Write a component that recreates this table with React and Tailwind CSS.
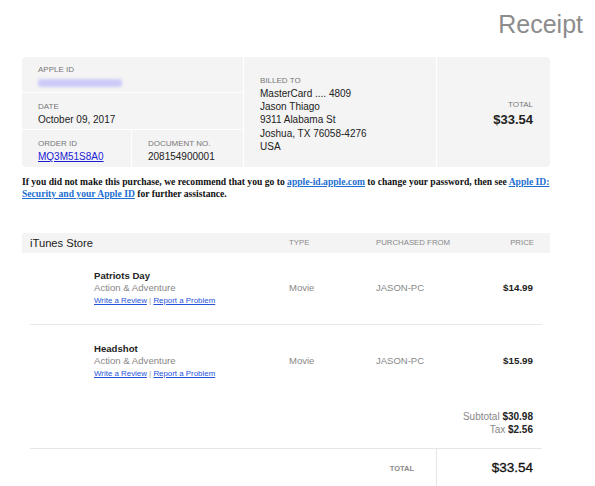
export default function App() {
  const items = [
    { title: "Patriots Day", genre: "Action & Adventure", price: "$14.99" },
    { title: "Headshot", genre: "Action & Adventure", price: "$15.99" },
  ];
  return (
    <div className="w-[595px] h-[486px] bg-white overflow-hidden font-['Liberation_Sans',Arial,sans-serif] text-[#333]">
      <div className="h-[57px] flex justify-end items-start pr-[12px] pt-[9px]">
        <span className="text-[25px] leading-[30px] text-[#8c8c8c]">Receipt</span>
      </div>
      <div className="ml-[22px] w-[528px]">
        {/* info box */}
        <div className="flex h-[110px] bg-[#f4f4f4] rounded-[4px] overflow-hidden">
          <div className="w-[222px] flex flex-col border-r border-white">
            <div className="h-[36px] border-b border-white pl-[16px] pt-[8px]">
              <div className="text-[8px] leading-[10px] text-[#777] uppercase">Apple ID</div>
              <div className="mt-[4px] h-[8px] w-[84px] bg-[#cbcaf8] rounded-[3px] blur-[1.5px]"></div>
            </div>
            <div className="h-[37px] border-b border-white pl-[16px] pt-[9px]">
              <div className="text-[8px] leading-[10px] text-[#777] uppercase">Date</div>
              <div className="text-[10px] leading-[14px] text-[#222] mt-[1px]">October 09, 2017</div>
            </div>
            <div className="flex-1 flex">
              <div className="w-[110px] border-r border-white pl-[16px] pt-[9px]">
                <div className="text-[8px] leading-[10px] text-[#777] uppercase">Order ID</div>
                <div className="text-[10px] leading-[14px] mt-[1px]">
                  <a className="text-[#1a1ad6] underline">MQ3M51S8A0</a>
                </div>
              </div>
              <div className="flex-1 pl-[16px] pt-[9px]">
                <div className="text-[8px] leading-[10px] text-[#777] uppercase">Document No.</div>
                <div className="text-[10px] leading-[14px] text-[#222] mt-[1px]">208154900001</div>
              </div>
            </div>
          </div>
          <div className="w-[193px] border-r border-white pl-[16px] pt-[18px]">
            <div className="text-[8px] leading-[11px] text-[#777] uppercase">Billed To</div>
            <div className="text-[10px] leading-[13.2px] text-[#222] mt-[1px]">
              <div>MasterCard .... 4809</div>
              <div>Jason Thiago</div>
              <div>9311 Alabama St</div>
              <div>Joshua, TX 76058-4276</div>
              <div>USA</div>
            </div>
          </div>
          <div className="flex-1 flex flex-col items-end justify-center pr-[17px] pt-[3px]">
            <div className="text-[8px] leading-[11px] text-[#777] uppercase">Total</div>
            <div className="text-[13px] leading-[17px] font-bold text-[#222] mt-[1px]">$33.54</div>
          </div>
        </div>

        {/* notice */}
        <p className="mt-[9px] font-['Liberation_Serif',serif] font-bold text-[9.6px] leading-[12px] text-[#111]">
          If you did not make this purchase, we recommend that you go to{" "}
          <a className="text-[#1d6fd1] underline">apple-id.apple.com</a> to change your password, then see{" "}
          <a className="text-[#1d6fd1] underline">Apple ID: Security and your Apple ID</a> for further assistance.
        </p>

        {/* table header */}
        <div className="mt-[33px] h-[20px] bg-[#f4f4f4] flex items-center">
          <div className="w-[267px] pl-[8px] text-[11.2px] text-[#222]">iTunes Store</div>
          <div className="w-[87px] text-[7.8px] text-[#888] uppercase">Type</div>
          <div className="flex-1 text-[7.8px] text-[#888] uppercase">Purchased From</div>
          <div className="pr-[16px] text-[7.8px] text-[#888] uppercase">Price</div>
        </div>

        {/* items */}
        {items.map((it, i) => (
          <div key={i} className={i === 0 ? "mx-[8px] border-b border-[#e8e8e8]" : "mx-[8px]"}>
            <div className={i === 0 ? "flex items-center h-[71px] pb-[1px]" : "flex items-center h-[73px] pt-[1px] pb-[1px]"}>
              <div className="w-[259px] pl-[64px]">
                <div className="text-[9.6px] leading-[12px] font-bold text-[#222]">{it.title}</div>
                <div className="text-[9.6px] leading-[12px] text-[#888]">{it.genre}</div>
                <div className="text-[7.9px] leading-[13px] text-[#999]">
                  <a className="text-[#2653d9] underline">Write a Review</a> |{" "}
                  <a className="text-[#2653d9] underline">Report a Problem</a>
                </div>
              </div>
              <div className="w-[87px] text-[9.5px] text-[#888]">Movie</div>
              <div className="flex-1 text-[9.5px] text-[#888]">JASON-PC</div>
              <div className="pr-[9px] text-[9.8px] font-bold text-[#222]">{it.price}</div>
            </div>
          </div>
        ))}

        {/* subtotal */}
        <div className="mt-[12px] flex flex-col items-end pr-[17px] text-[10px] leading-[13px]">
          <div>
            <span className="text-[#888]">Subtotal</span> <span className="font-bold text-[#222]">$30.98</span>
          </div>
          <div>
            <span className="text-[#888]">Tax</span> <span className="font-bold text-[#222]">$2.56</span>
          </div>
        </div>

        {/* total */}
        <div className="mt-[12px] mx-[8px] border-t border-[#e6e6e6] flex h-[50px]">
          <div className="w-[407px] border-r border-[#e6e6e6] flex items-center justify-end pr-[22px] pb-[10px]">
            <span className="text-[7.5px] font-bold text-[#888] uppercase">Total</span>
          </div>
          <div className="flex-1 flex items-center justify-end pr-[9px] pb-[10px]">
            <span className="text-[13.5px] text-[#111] [-webkit-text-stroke:0.3px_#111]">$33.54</span>
          </div>
        </div>
      </div>
    </div>
  );
}
